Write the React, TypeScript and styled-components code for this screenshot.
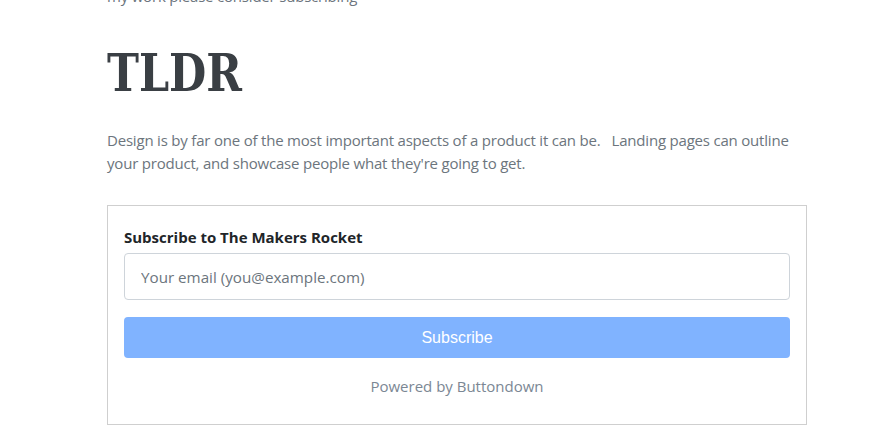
import React from "react"
import styled, { createGlobalStyle } from "styled-components"

const GlobalStyle = createGlobalStyle`
  body {
    margin: 0;
    background: #fff;
    overflow: hidden;
  }
`

const Page = styled.div`
  width: 700px;
  margin-left: 107px;
  margin-top: -15px;
  font-family: "Open Sans", "Liberation Sans", sans-serif;
`

const Intro = styled.p`
  margin: 0;
  font-size: 15px;
  line-height: 23px;
  letter-spacing: -0.2px;
  color: #6c757d;
`

const Title = styled.h1`
  margin: 32px 0 0;
  font-family: "DejaVu Serif Condensed", "DejaVu Serif", serif;
  font-weight: 700;
  font-size: 53px;
  line-height: 64px;
  color: #3a3f44;
  transform: scaleX(0.9);
  transform-origin: left center;
`

const Lead = styled.p`
  margin: 25px 0 0;
  font-size: 15px;
  line-height: 23px;
  letter-spacing: -0.2px;
  color: #6c757d;
  white-space: pre-wrap;
`

const Card = styled.form`
  margin-top: 30px;
  border: 1px solid #cfcfcf;
  padding: 21px 16px 26px;
  display: flex;
  flex-direction: column;
`

const Label = styled.label`
  font-size: 15px;
  font-weight: 700;
  line-height: 20px;
  color: #212529;
`

const EmailInput = styled.input`
  margin-top: 6px;
  height: 47px;
  box-sizing: border-box;
  border: 1px solid #ced4da;
  border-radius: 4px;
  padding: 0 16px;
  font-family: "Open Sans", sans-serif;
  font-size: 15.2px;
  color: #495057;
  &::placeholder {
    color: #6c757d;
  }
`

const SubmitButton = styled.button`
  margin-top: 17px;
  height: 41px;
  border: none;
  border-radius: 4px;
  background: #80b3ff;
  color: #fff;
  font-family: "Liberation Sans", Arial, sans-serif;
  font-size: 16px;
`

const Powered = styled.p`
  margin: 17px 0 0;
  text-align: center;
  font-size: 15px;
  line-height: 23px;
  color: #7b8794;
`

export default function App() {
  return (
    <>
      <GlobalStyle />
      <Page>
        <Intro>my work please consider subscribing</Intro>
        <Title>TLDR</Title>
        <Lead>
          {"Design is by far one of the most important aspects of a product it can be.   Landing pages can outline your product, and showcase people what they're going to get."}
        </Lead>
        <Card onSubmit={(e) => e.preventDefault()}>
          <Label htmlFor="bd-email">Subscribe to The Makers Rocket</Label>
          <EmailInput id="bd-email" type="email" placeholder="Your email (you@example.com)" />
          <SubmitButton type="submit">Subscribe</SubmitButton>
          <Powered>Powered by Buttondown</Powered>
        </Card>
      </Page>
    </>
  )
}
